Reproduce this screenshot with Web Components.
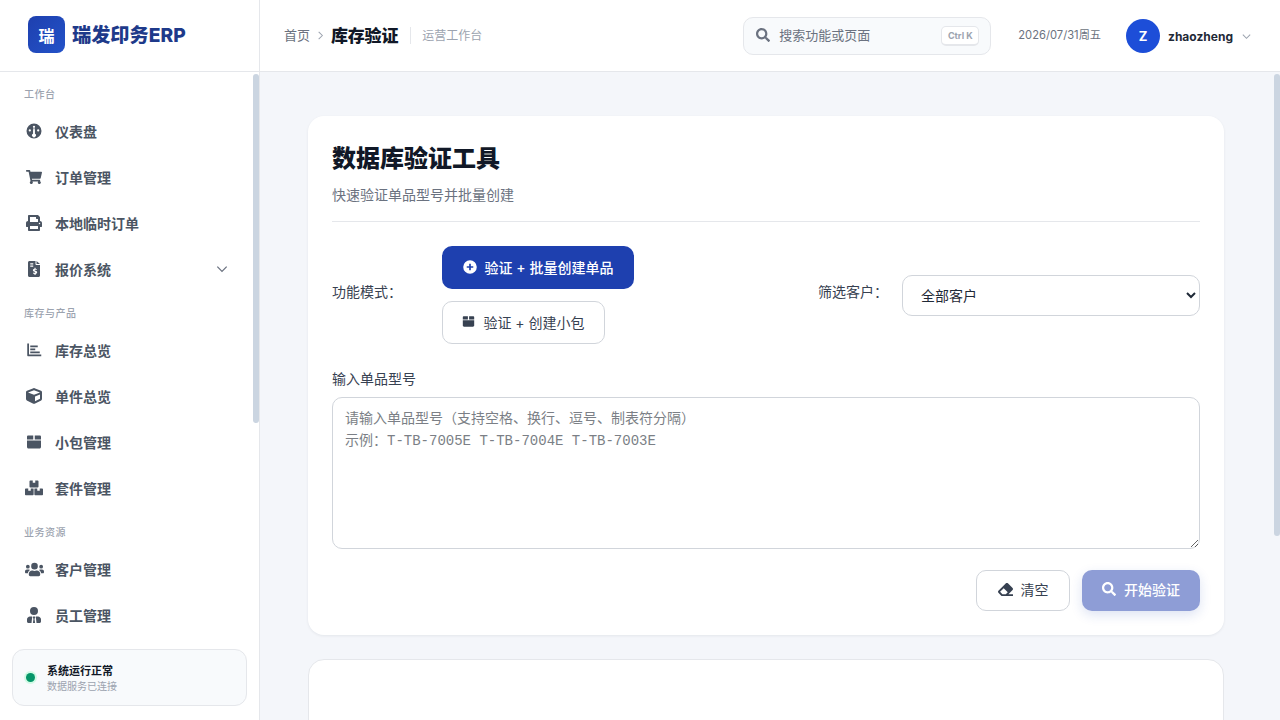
<!DOCTYPE html>
<html lang="zh-CN">
<head>
<meta charset="utf-8">
<title>数据库验证工具</title>
<style>
    html,body{
        margin:0;
        height:100%;
        overflow:hidden;
        font-family:Inter,"Noto Sans CJK SC",sans-serif;
    }
</style>
</head>
<body>
<app-shell>
    <side-bar slot="side">
        <nav-group label="工作台">
            <nav-item icon="gauge">仪表盘</nav-item>
            <nav-item icon="cart">订单管理</nav-item>
            <nav-item icon="print">本地临时订单</nav-item>
            <nav-item icon="invoice" arrow>报价系统</nav-item>
        </nav-group>
        <nav-group label="库存与产品">
            <nav-item icon="chart">库存总览</nav-item>
            <nav-item icon="cube">单件总览</nav-item>
            <nav-item icon="box">小包管理</nav-item>
            <nav-item icon="boxes" size="18">套件管理</nav-item>
        </nav-group>
        <nav-group label="业务资源">
            <nav-item icon="users" size="19">客户管理</nav-item>
            <nav-item icon="tie">员工管理</nav-item>
        </nav-group>
    </side-bar>
    <top-bar slot="top"></top-bar>
    <verify-card></verify-card>
    <empty-card></empty-card>
</app-shell>
<script>
const icons={
    gauge:['0 0 512 512','M256 16a240 240 0 1 0 0 480 240 240 0 0 0 0-480zm0 70a36 36 0 1 1 0 72 36 36 0 0 1 0-72zM122 200a36 36 0 1 1 0 72 36 36 0 0 1 0-72zm268 0a36 36 0 1 1 0 72 36 36 0 0 1 0-72zM226 250l10-80h40l10 80v90a62 62 0 1 1-60 0z'],
    cart:['0 0 576 512','M528.12 301.319l47.273-208C578.806 78.301 567.391 64 551.99 64H159.208l-9.166-44.81C147.758 8.021 137.93 0 126.529 0H24C10.745 0 0 10.745 0 24v16c0 13.255 10.745 24 24 24h69.883l70.248 343.435C147.325 417.1 136 435.222 136 456c0 30.928 25.072 56 56 56s56-25.072 56-56c0-15.674-6.447-29.835-16.824-40h209.647C430.447 426.165 424 440.326 424 456c0 30.928 25.072 56 56 56s56-25.072 56-56c0-22.172-12.888-41.332-31.579-50.405l5.517-24.276c3.413-15.018-8.002-29.319-23.403-29.319H218.117l-6.545-32h293.145c11.206 0 20.92-7.754 23.403-18.681z'],
    print:['0 0 512 512','M448 192V77.25c0-8.49-3.37-16.62-9.37-22.63L393.37 9.37c-6-6-14.14-9.37-22.63-9.37H96C78.33 0 64 14.33 64 32v160c-35.35 0-64 28.65-64 64v112c0 8.84 7.16 16 16 16h48v96c0 17.67 14.33 32 32 32h320c17.67 0 32-14.33 32-32v-96h48c8.84 0 16-7.16 16-16V256c0-35.35-28.65-64-64-64zm-64 256H128v-96h256v96zm0-224H128V64h192v48c0 8.84 7.16 16 16 16h48v96zm48 72c-13.25 0-24-10.75-24-24 0-13.26 10.75-24 24-24s24 10.74 24 24c0 13.25-10.75 24-24 24z'],
    invoice:['0 0 384 512','M48 0C22 0 0 22 0 48v416c0 26 22 48 48 48h288c26 0 48-22 48-48V128H272c-18 0-32-14-32-32V0zm224 0v96h112zM72 72h96v36H72zm0 72h96v36H72zm136 72v28c-32 4-52 24-52 50 0 30 26 42 50 49 18 5 30 9 30 19 0 9-11 14-26 14-12 0-28-5-40-12l-12 36c12 7 30 12 50 14v30h34v-30c32-5 52-26 52-53 0-32-27-44-52-51-17-5-28-9-28-17 0-7 8-12 22-12 12 0 25 4 36 10l12-34c-12-6-26-10-42-12v-29z'],
    chart:['0 0 512 512','M40 48h56v352h392v56H72c-18 0-32-14-32-32zM136 112h240v56H136zm0 96h160v56H136zm0 96h304v56H136z'],
    cube:['0 0 512 512','M239.1 6.3l-208 78c-18.7 7-31.1 25-31.1 45v225.1c0 18.2 10.3 34.8 26.5 42.9l208 104c13.5 6.8 29.4 6.8 42.9 0l208-104c16.3-8.1 26.5-24.8 26.5-42.9V129.3c0-20-12.4-37.9-31.1-44.9l-208-78C262 2.2 250 2.2 239.1 6.3zM256 68.4l192 72v1.1l-192 78-192-78v-1.1l192-72zm32 356V275.5l160-65v133.9l-160 80z'],
    box:['0 0 512 512','M32 204h448v212c0 26-22 48-48 48H80c-26 0-48-22-48-48zM72 48h160v128H32V88c0-22 18-40 40-40zm208 0h160c22 0 40 18 40 40v88H280z'],
    boxes:['0 0 576 512','M168 16h80v70h80V16h80c13 0 24 11 24 24v176c0 13-11 24-24 24H168c-13 0-24-11-24-24V40c0-13 11-24 24-24zM24 272h80v70h80v-70h80c7 0 12 5 12 12v180c0 13-11 24-24 24H24c-13 0-24-11-24-24V296c0-13 11-24 24-24zm288 0h80v70h80v-70h80c13 0 24 11 24 24v168c0 13-11 24-24 24H324c-13 0-24-11-24-24V284c0-7 5-12 12-12z'],
    users:['0 0 640 512','M96 224a64 64 0 1 0 0-128 64 64 0 0 0 0 128zm448 0a64 64 0 1 0 0-128 64 64 0 0 0 0 128zm32 32h-64c-18 0-34 7-45 19 40 22 69 62 75 109h66c18 0 32-14 32-32v-32c0-35-29-64-64-64zm-256 0a112 112 0 1 0 0-224 112 112 0 0 0 0 224zm77 32h-8c-21 10-44 16-69 16s-48-6-69-16h-8c-64 0-115 52-115 115v29c0 26 22 48 48 48h288c26 0 48-22 48-48v-29c0-63-51-115-115-115zM173 275c-11-12-27-19-45-19H64c-35 0-64 29-64 64v32c0 18 14 32 32 32h66c6-47 35-87 75-109z'],
    tie:['0 0 448 512','M224 256a128 128 0 1 0 0-256 128 128 0 0 0 0 256zM96 304c-53 0-96 43-96 96v64c0 26 22 48 48 48h96l24-208zm256 0l-72 0 24 208h96c26 0 48-22 48-48v-64c0-53-43-96-96-96zM198 304l-16 40 26 30-20 138h72l-20-138 26-30-16-40z'],
    search:['0 0 512 512','M505 442.7L405.3 343c-4.5-4.5-10.6-7-17-7H372c27.6-35.3 44-79.7 44-128C416 93.1 322.9 0 208 0S0 93.1 0 208s93.1 208 208 208c48.3 0 92.7-16.4 128-44v16.3c0 6.4 2.5 12.5 7 17l99.7 99.7c9.4 9.4 24.6 9.4 33.9 0l28.3-28.3c9.4-9.4 9.4-24.6.1-34zM208 336c-70.7 0-128-57.2-128-128 0-70.7 57.2-128 128-128 70.7 0 128 57.2 128 128 0 70.7-57.2 128-128 128z'],
    plus:['0 0 512 512','M256 8a248 248 0 1 0 0 496 248 248 0 0 0 0-496zm120 270c0 5-4 9-9 9h-80v80c0 5-4 9-9 9h-44c-5 0-9-4-9-9v-80h-80c-5 0-9-4-9-9v-44c0-5 4-9 9-9h80v-80c0-5 4-9 9-9h44c5 0 9 4 9 9v80h80c5 0 9 4 9 9z'],
    eraser:['0 0 512 512','M497.941 273.941c18.745-18.745 18.745-49.137 0-67.882l-160-160c-18.745-18.745-49.137-18.745-67.882 0l-256 256c-18.745 18.745-18.745 49.137 0 67.882l96 96A48.004 48.004 0 0 0 144 480h356c6.627 0 12-5.373 12-12v-40c0-6.627-5.373-12-12-12H355.883l142.058-142.059zm-302.627-62.627l137.373 137.373L265.373 416H150.628l-80-80 124.686-124.686z']
}
function svgIcon(name,size,color){
    const [box,d]=icons[name]
    return `<svg width="${size}" height="${size}" viewBox="${box}" fill="${color}" aria-hidden="true"><path fill-rule="evenodd" d="${d}"/></svg>`
}
const chevron=(size,color)=>`<svg width="${size}" height="${size}" viewBox="0 0 12 12" fill="none" stroke="${color}" stroke-width="1.1"><path d="M2 4l4 4 4-4"/></svg>`

class AppShell extends HTMLElement{
    constructor(){
        super()
        this.shadowDom=this.attachShadow({mode:"open"})
    }
    connectedCallback(){
        this.shadowDom.innerHTML=`
            <style>
                :host{display:grid;grid-template-columns:260px 1fr;grid-template-rows:72px 648px;height:720px;background:#f4f6fa}
                .side{grid-row:1 / 3;min-height:0}
                .wrap{position:relative;min-height:0}
                .main{
                    height:100%;
                    overflow:hidden;
                    padding:44px 56px 40px 48px;
                    box-sizing:border-box;
                    display:flex;
                    flex-direction:column;
                    gap:24px;
                }
                .thumb{position:absolute;top:2px;right:0;width:6px;height:462px;border-radius:3px;background:#cbd5e1}
            </style>
            <div class="side"><slot name="side"></slot></div>
            <slot name="top"></slot>
            <div class="wrap">
                <div class="main"><slot></slot></div>
                <div class="thumb"></div>
            </div>
        `
    }
}
class SideBar extends HTMLElement{
    constructor(){
        super()
        this.shadowDom=this.attachShadow({mode:"open"})
    }
    connectedCallback(){
        this.shadowDom.innerHTML=`
            <style>
                :host{display:flex;flex-direction:column;height:720px;background:#fff;border-right:1px solid #e5e7eb;box-sizing:border-box}
                .logo{height:72px;flex:none;box-sizing:border-box;border-bottom:1px solid #e5e7eb;display:flex;align-items:center;gap:7px;padding:0 0 2px 28px}
                .mark{width:37px;height:37px;border-radius:8px;background:linear-gradient(135deg,#1e40af,#2352c8);color:#fff;font-size:16px;font-weight:700;display:flex;align-items:center;justify-content:center}
                .name{font-size:19.2px;font-weight:800;color:#1e3a8a;white-space:nowrap;padding-bottom:2px}
                .navwrap{flex:1;min-height:0;position:relative}
                nav{height:100%;overflow:hidden;padding:12px 0 0;box-sizing:border-box}
                .thumb{position:absolute;top:2px;right:0;width:6px;height:349px;border-radius:3px;background:#cbd5e1}
                .status{flex:none;margin:8px 12px 14px;height:57px;box-sizing:border-box;border:1px solid #e5e7eb;border-radius:12px;background:#f8fafc;display:flex;align-items:center;gap:12px;padding:0 13px}
                .dot{width:9px;height:9px;border-radius:50%;background:#059669;box-shadow:0 0 0 2px #d1fae5}
                .text{margin-top:3px}
                .t1{font-size:11px;font-weight:700;color:#111827;line-height:15px}
                .t2{font-size:10px;color:#9ca3af;line-height:15px}
            </style>
            <div class="logo"><div class="mark">瑞</div><div class="name">瑞发印务ERP</div></div>
            <div class="navwrap">
                <nav><slot></slot></nav>
                <div class="thumb"></div>
            </div>
            <div class="status">
                <span class="dot"></span>
                <div class="text"><div class="t1">系统运行正常</div><div class="t2">数据服务已连接</div></div>
            </div>
        `
    }
}
class NavGroup extends HTMLElement{
    constructor(){
        super()
        this.shadowDom=this.attachShadow({mode:"open"})
    }
    connectedCallback(){
        this.shadowDom.innerHTML=`
            <style>
                :host{display:block;margin-bottom:10px}
                .label{height:20px;line-height:20px;margin-bottom:5px;padding-left:24px;font-size:10px;letter-spacing:.5px;color:#9ca3af;font-weight:500}
                .items{display:flex;flex-direction:column}
            </style>
            <div class="label">${this.getAttribute('label')}</div>
            <div class="items"><slot></slot></div>
        `
    }
}
class NavItem extends HTMLElement{
    constructor(){
        super()
        this.shadowDom=this.attachShadow({mode:"open"})
    }
    connectedCallback(){
        const arrow=this.hasAttribute('arrow') ? `<span class="arrow">${chevron(14,'#6b7280')}</span>` : ''
        const size=this.getAttribute('size') || 16
        this.shadowDom.innerHTML=`
            <style>
                :host{display:flex;align-items:center;height:46px;box-sizing:border-box;padding:0 0 2px 24px;font-size:14px;font-weight:600;color:#4b5563}
                .icon{width:20px;display:flex;justify-content:center;margin-right:11px}
                .arrow{margin-left:auto;margin-right:30px;display:flex}
            </style>
            <span class="icon">${svgIcon(this.getAttribute('icon'),size,'#4b5563')}</span>
            <slot></slot>${arrow}
        `
    }
}
class TopBar extends HTMLElement{
    constructor(){
        super()
        this.shadowDom=this.attachShadow({mode:"open"})
    }
    connectedCallback(){
        this.shadowDom.innerHTML=`
            <style>
                :host{display:flex;align-items:center;height:72px;box-sizing:border-box;background:#fff;border-bottom:1px solid #e5e7eb;padding:0 28px 1px 24px}
                .lift{padding-bottom:2px}
                .home{font-size:13px;color:#6b7280}
                .sep{margin:0 4px 0 5px;display:flex;transform:rotate(-90deg)}
                .cur{font-size:17px;font-weight:800;letter-spacing:-.2px;color:#111827;margin-left:1px}
                .line{width:1px;height:17px;background:#e5e7eb;margin:0 11px 0 12px}
                .sub{font-size:12px;color:#9ca3af}
                .search{margin:2px 0 0 auto;width:248px;height:38px;box-sizing:border-box;border:1px solid #e5e7eb;border-radius:10px;background:#f8fafc;display:flex;align-items:center;padding:0 11px 0 12px;font-size:13px;color:#6b7280}
                .search svg{margin:0 9px 2px 0}
                .search .hint{padding-bottom:4px}
                kbd{margin-left:auto;width:38px;height:20px;box-sizing:border-box;border:1px solid #e5e7eb;border-bottom-width:2px;border-radius:5px;background:#fff;font:700 9px Inter,sans-serif;color:#9ca3af;display:flex;align-items:center;justify-content:center}
                .date{margin-left:27px;font-size:11.2px;color:#6b7280;white-space:nowrap}
                .avatar{margin:2px 0 0 25px;width:34px;height:34px;border-radius:50%;background:#1d4ed8;color:#fff;font-size:13px;font-weight:700;display:flex;align-items:center;justify-content:center}
                .user{margin:2px 0 0 8px;font-size:12px;font-weight:700;color:#1f2937}
                .drop{margin:2px 0 0 8px;display:flex}
            </style>
            <span class="home lift">首页</span>
            <span class="sep">${chevron(11,'#9ca3af')}</span>
            <span class="cur lift">库存验证</span>
            <span class="line"></span>
            <span class="sub lift">运营工作台</span>
            <div class="search">${svgIcon('search',14,'#6b7280')}<span class="hint">搜索功能或页面</span><kbd>Ctrl K</kbd></div>
            <span class="date lift">2026/07/31周五</span>
            <span class="avatar">Z</span>
            <span class="user">zhaozheng</span>
            <span class="drop">${chevron(11,'#9ca3af')}</span>
        `
    }
}
class ActionButton extends HTMLElement{
    constructor(){
        super()
        this.shadowDom=this.attachShadow({mode:"open"})
    }
    connectedCallback(){
        const kind=this.getAttribute('kind') || 'plain'
        const color=kind==='plain' ? '#374151' : '#fff'
        this.shadowDom.innerHTML=`
            <style>
                :host{display:inline-flex;align-items:center;justify-content:center;gap:8px;box-sizing:border-box;border-radius:10px;font-size:14px;cursor:pointer;padding-bottom:2px}
                :host([kind=plain]){background:#fff;border:1px solid #d1d5db;color:#374151}
                :host([kind=primary]){background:#1e40af;color:#fff;font-weight:500}
                :host([kind=disabled]){background:#8e9dd6;color:#fff;font-weight:500;box-shadow:0 4px 12px rgba(30,64,175,.15)}
                svg{display:block}
            </style>
            ${svgIcon(this.getAttribute('icon'),this.getAttribute('size') || 14,color)}<slot></slot>
        `
    }
}
class VerifyCard extends HTMLElement{
    constructor(){
        super()
        this.shadowDom=this.attachShadow({mode:"open"})
    }
    connectedCallback(){
        this.shadowDom.innerHTML=`
            <style>
                :host{display:block;flex:none;background:#fff;border-radius:16px;box-shadow:0 1px 3px rgba(17,24,39,.07);padding:24px;height:519px;box-sizing:border-box}
                h1{margin:0;padding-top:1px;font-size:24px;line-height:36px;font-weight:800;color:#111827}
                .desc{margin:8px 0 0;font-size:14px;line-height:20px;color:#6b7280;padding-bottom:16px;border-bottom:1px solid #e5e7eb}
                .row{display:flex;justify-content:space-between;align-items:center;margin-top:24px}
                .left,.right{display:flex;align-items:center}
                .label{font-size:14px;color:#374151;white-space:nowrap;padding-bottom:8px}
                .left .label{width:110px}
                .modes{display:flex;flex-direction:column;align-items:flex-start;gap:12px}
                .modes action-button{height:43px}
                .m1{width:192px}
                .m2{width:163px}
                .right .label{width:84px}
                select{width:298px;height:41px;box-sizing:border-box;border:1px solid #d1d5db;border-radius:10px;background:#fff;padding:0 14px;font:14px Inter,"Noto Sans CJK SC",sans-serif;color:#1f2937}
                .field{display:block;margin-top:26px;font-size:14px;line-height:18px;color:#374151}
                textarea{display:block;width:100%;height:152px;margin-top:9px;box-sizing:border-box;border:1px solid #d1d5db;border-radius:10px;padding:10px 12px;font:14px/22px "Liberation Mono","Noto Sans CJK SC",monospace;color:#374151;resize:vertical;outline:none}
                textarea::placeholder{color:#7b7f86;opacity:1}
                .actions{display:flex;justify-content:flex-end;gap:12px;margin-top:21px}
                .actions action-button{height:41px;padding-bottom:3px}
                .clear{width:94px}
                .start{width:118px}
            </style>
            <h1>数据库验证工具</h1>
            <p class="desc">快速验证单品型号并批量创建</p>
            <div class="row">
                <div class="left">
                    <span class="label">功能模式：</span>
                    <div class="modes">
                        <action-button class="m1" kind="primary" icon="plus">验证 + 批量创建单品</action-button>
                        <action-button class="m2" kind="plain" icon="box" size="13">验证 + 创建小包</action-button>
                    </div>
                </div>
                <div class="right">
                    <span class="label">筛选客户：</span>
                    <select><option>全部客户</option></select>
                </div>
            </div>
            <label class="field">输入单品型号</label>
            <textarea placeholder="请输入单品型号（支持空格、换行、逗号、制表符分隔）&#10;示例：T-TB-7005E T-TB-7004E T-TB-7003E"></textarea>
            <div class="actions">
                <action-button class="clear" kind="plain" icon="eraser" size="15">清空</action-button>
                <action-button class="start" kind="disabled" icon="search">开始验证</action-button>
            </div>
        `
    }
}
class EmptyCard extends HTMLElement{
    constructor(){
        super()
        this.shadowDom=this.attachShadow({mode:"open"})
    }
    connectedCallback(){
        this.shadowDom.innerHTML=`
            <style>
                :host{display:block;flex:none;height:280px;background:#fff;border:1px solid #e5e7eb;border-radius:16px;box-sizing:border-box}
            </style>
        `
    }
}
window.customElements.define('app-shell',AppShell)
window.customElements.define('side-bar',SideBar)
window.customElements.define('nav-group',NavGroup)
window.customElements.define('nav-item',NavItem)
window.customElements.define('top-bar',TopBar)
window.customElements.define('action-button',ActionButton)
window.customElements.define('verify-card',VerifyCard)
window.customElements.define('empty-card',EmptyCard)
</script>
</body>
</html>
